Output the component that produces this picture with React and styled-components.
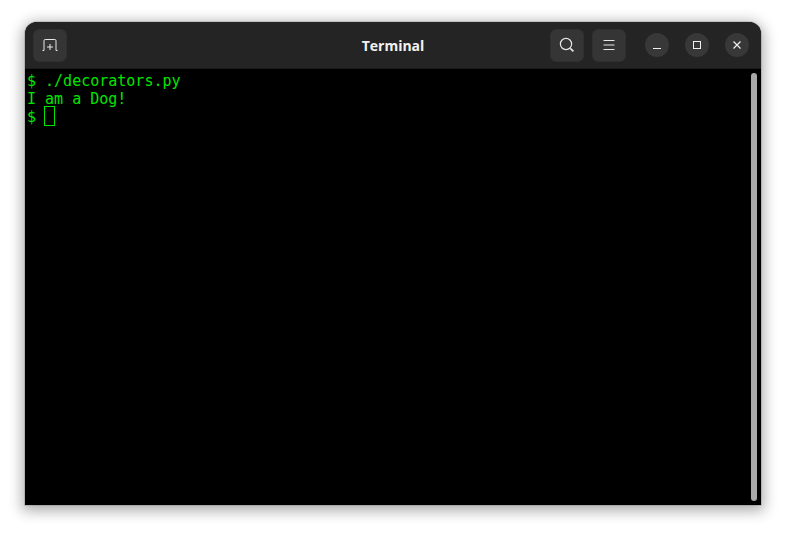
import React from "react";
import styled, { createGlobalStyle } from "styled-components";

const GlobalStyle = createGlobalStyle`
  html, body {
    margin: 0;
    height: 100%;
    background: #ffffff;
    overflow: hidden;
  }
`;

const Desktop = styled.div`
  box-sizing: border-box;
  width: 786px;
  height: 533px;
  padding: 22px 25px 28px 25px;
`;

const Window = styled.div`
  display: flex;
  flex-direction: column;
  width: 736px;
  height: 483px;
  border-radius: 12px 12px 0 0;
  overflow: hidden;
  background: #000;
  box-shadow: 0 3px 14px 3px rgba(0, 0, 0, 0.32), 0 0 0 1px rgba(0, 0, 0, 0.12);
`;

const TitleBar = styled.header`
  box-sizing: border-box;
  flex: none;
  height: 47px;
  display: grid;
  grid-template-columns: 1fr auto 1fr;
  align-items: center;
  padding: 0 12px 0 8px;
  background: #242424;
  border-bottom: 1px solid #1a1a1a;
`;

const Side = styled.div`
  display: flex;
  align-items: center;
  justify-content: ${(p) => (p.$end ? "flex-end" : "flex-start")};
`;

const Title = styled.h1`
  margin: 0 0 0 4px;
  font-family: "Open Sans", "Noto Sans", sans-serif;
  font-size: 14px;
  font-weight: 700;
  color: #f2f2f2;
`;

const HeaderButton = styled.button`
  width: 34px;
  height: 33px;
  margin-left: ${(p) => p.$gap || 0}px;
  padding: 0;
  display: flex;
  align-items: center;
  justify-content: center;
  background: #353535;
  border: 1px solid #303030;
  border-radius: 6px;
  color: #e8e8e8;
`;

const WindowButton = styled.button`
  width: 24px;
  height: 24px;
  margin-left: ${(p) => p.$gap}px;
  padding: 0;
  display: flex;
  align-items: center;
  justify-content: center;
  background: #383838;
  border: none;
  border-radius: 50%;
  color: #f0f0f0;
`;

const TerminalArea = styled.main`
  flex: 1;
  min-height: 0;
  display: flex;
  background: #000;
`;

const Output = styled.pre`
  flex: 1;
  margin: 0;
  padding: 3px 0 0 2px;
  font-family: "DejaVu Sans Mono", "Liberation Mono", monospace;
  font-size: 15px;
  line-height: 18px;
  color: #00e600;
`;

const Cursor = styled.span`
  display: inline-block;
  box-sizing: border-box;
  width: 11px;
  height: 20px;
  margin: -3px 0 -3px -1px;
  vertical-align: -1px;
  border: 1px solid #00e600;
`;

const ScrollTrack = styled.div`
  flex: none;
  width: 10px;
  padding: 4px 4px 4px 0;
  box-sizing: border-box;
  display: flex;
`;

const ScrollThumb = styled.div`
  flex: 1;
  border-radius: 3px;
  background: #a8a8a8;
`;

const NewTabIcon = () => (
  <svg width="16" height="16" viewBox="0 0 16 16" fill="none" stroke="currentColor" strokeWidth="1">
    <path d="M0.5 13.5h1.5V3.7a1.2 1.2 0 0 1 1.2-1.2h9.6a1.2 1.2 0 0 1 1.2 1.2v9.8h1.5" />
    <path d="M8 7v6M5 10h6" />
  </svg>
);

const SearchIcon = () => (
  <svg width="16" height="16" viewBox="0 0 16 16" fill="none" stroke="currentColor">
    <circle cx="7" cy="7" r="5.6" strokeWidth="1.2" />
    <path d="M11.3 11.3L14.4 14.4" strokeWidth="1.7" />
  </svg>
);

const MenuIcon = () => (
  <svg width="16" height="16" viewBox="0 0 16 16" fill="none" stroke="currentColor" strokeWidth="1">
    <path d="M2.5 3.5h11M2.5 8h11M2.5 12.5h11" />
  </svg>
);

const MinimizeIcon = () => (
  <svg width="10" height="10" viewBox="0 0 10 10" fill="none" stroke="currentColor" strokeWidth="1">
    <path d="M1 8.5h8" />
  </svg>
);

const MaximizeIcon = () => (
  <svg width="10" height="10" viewBox="0 0 10 10" fill="none" stroke="currentColor" strokeWidth="1">
    <rect x="1.5" y="1.5" width="7" height="7" />
  </svg>
);

const CloseIcon = () => (
  <svg width="10" height="10" viewBox="0 0 10 10" fill="none" stroke="currentColor" strokeWidth="1.2">
    <path d="M1.5 1.5l7 7M8.5 1.5l-7 7" />
  </svg>
);

const App = () => {
  return (
    <Desktop>
      <GlobalStyle />
      <Window>
        <TitleBar>
          <Side>
            <HeaderButton>
              <NewTabIcon />
            </HeaderButton>
          </Side>
          <Title>Terminal</Title>
          <Side $end>
            <HeaderButton>
              <SearchIcon />
            </HeaderButton>
            <HeaderButton $gap={8}>
              <MenuIcon />
            </HeaderButton>
            <WindowButton $gap={19}>
              <MinimizeIcon />
            </WindowButton>
            <WindowButton $gap={16}>
              <MaximizeIcon />
            </WindowButton>
            <WindowButton $gap={16}>
              <CloseIcon />
            </WindowButton>
          </Side>
        </TitleBar>
        <TerminalArea>
          <Output>
            {"$ ./decorators.py\nI am a Dog!\n$ "}
            <Cursor />
          </Output>
          <ScrollTrack>
            <ScrollThumb />
          </ScrollTrack>
        </TerminalArea>
      </Window>
    </Desktop>
  );
};

export default App;
